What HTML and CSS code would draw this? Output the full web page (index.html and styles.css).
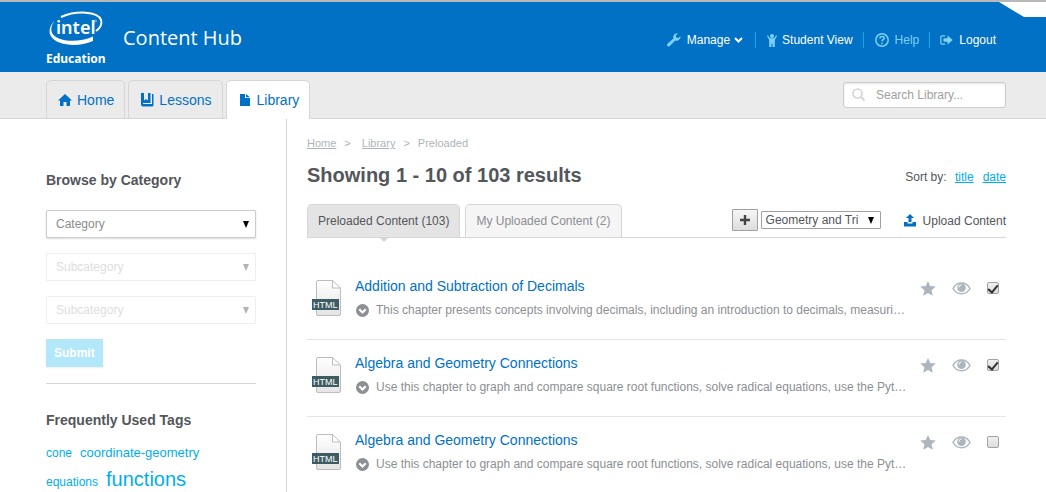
FILE: index.html
```html
<!DOCTYPE html>
<html lang="en">
<head>
<meta charset="utf-8">
<title>Content Hub</title>
<link rel="stylesheet" href="styles.css">
</head>
<body>
<svg class="defs" aria-hidden="true">
  <defs>
    <linearGradient id="paper" x1="0" y1="0" x2="0" y2="1"><stop offset="0" stop-color="#fff"/><stop offset="1" stop-color="#e4e4e4"/></linearGradient>
  </defs>
  <symbol id="i-html" viewBox="0 0 30 37">
    <path d="M6 .5h14.500l8 8V34a1.500 1.500 0 0 1-1.500 1.500H6A1.500 1.500 0 0 1 4.500 34V2A1.500 1.500 0 0 1 6 .5z" fill="url(#paper)" stroke="#bdbdbd"/>
    <path d="M20.500 .5v7.500h8z" fill="#fff" stroke="#bdbdbd"/>
    <path d="M0 19h27v11H0z" fill="#3d5c63"/>
  </symbol>
  <symbol id="i-down" viewBox="0 0 12 12"><circle cx="6" cy="6" r="6" fill="#8c8f93"/><path d="M3 4.800l3 3 3-3" fill="none" stroke="#fff" stroke-width="2"/></symbol>
  <symbol id="i-star" viewBox="0 0 16 15"><path fill="#adb5bd" d="M8 0l2.200 5.100 5.600.500-4.200 3.700 1.200 5.500L8 11.900l-4.800 2.900 1.200-5.500L.2 5.600l5.600-.500z"/></symbol>
  <symbol id="i-eye" viewBox="0 0 19 13"><path d="M1 6.500C5-.800 14-.800 18 6.500 14 13.500 5 13.500 1 6.500z" fill="none" stroke="#adb5bd" stroke-width="1.500"/><circle cx="9.500" cy="5.700" r="4.300" fill="#adb5bd"/><path d="M7 5.500A2.500 2.500 0 0 1 9.500 3" fill="none" stroke="#fff"/></symbol>
</svg>

<header class="header">
  <a class="brand" href="#" aria-label="Intel Education">
    <svg width="60" height="56" viewBox="0 0 60 56">
      <path d="M15 6C30-.500 52 0 55 9c1.200 4-1 8-5 11" fill="none" stroke="#fff" stroke-width="2"/>
      <path d="M9 9.500C4 14 1.500 21 5.500 26 11 34 31 37 47 30v-4.500C33 32 14 31 7.500 24 4 20 5 14 9 9.500z" fill="#fff"/>
      <text class="logo-intel" x="10" y="23">intel</text>
      <circle cx="49.500" cy="10" r="1" fill="none" stroke="#fff" stroke-width=".5"/>
      <text class="logo-education" x="0" y="52">Education</text>
    </svg>
  </a>
  <span class="product">Content Hub</span>
  <nav class="account" aria-label="Account">
    <a href="#"><svg width="14" height="14" viewBox="0 0 14 14"><path fill="#7fd0f5" d="M13.500 3.200A4 4 0 0 1 8.300 7.500l-5.500 5.600a1.600 1.600 0 0 1-2.300-2.300L6.400 5.400A4 4 0 0 1 10.900.300L8.900 2.500l.400 2 2 .500z"/></svg>Manage<svg class="chevron" width="9" height="6" viewBox="0 0 9 6"><path d="M1 1l3.500 3.500L8 1" fill="none" stroke="#fff" stroke-width="2"/></svg></a>
    <a class="student" href="#"><svg width="10" height="13" viewBox="0 0 10 13"><g fill="#7fd0f5"><circle cx="5" cy="2" r="2"/><path d="M.800 1.300L3 4.300h4l2.200-3 .8.700-2.200 4V13H5.500V9.500h-1V13H2.200V6L0 2z"/></g></svg>Student View</a>
    <a class="help" href="#"><svg width="14" height="14" viewBox="0 0 14 14"><circle cx="7" cy="7" r="6.200" fill="none" stroke="#7fd0f5" stroke-width="1.500"/><path d="M4.900 5.500c0-2.700 4.300-2.500 4.300-.200C9.200 6.800 7 6.700 7 8.500M7 9.700v1.500" fill="none" stroke="#7fd0f5" stroke-width="1.500"/></svg>Help</a>
    <a class="logout" href="#"><svg width="13" height="11" viewBox="0 0 13 11"><path d="M5 .800H2.300A1.500 1.500 0 0 0 .8 2.300v5.400a1.500 1.500 0 0 0 1.500 1.500H5" fill="none" stroke="#7fd0f5" stroke-width="1.200"/><path fill="#7fd0f5" d="M3.500 3.300H7.500V.500L12.800 5l-5.300 4.500V6.700h-4z"/></svg>Logout</a>
  </nav>
  <svg class="corner" width="47" height="15" viewBox="0 0 47 15" aria-hidden="true"><path d="M0 0h47v15H25z" fill="#fff"/></svg>
</header>

<div class="navbar">
  <nav class="tabs" aria-label="Sections">
    <a href="#"><svg width="14" height="12" viewBox="0 0 14 12"><path fill="#0071c5" d="M7 0l7 6.500h-2V12H8.500V8h-3v4H2V6.500H0z"/></svg>Home</a>
    <a href="#"><svg width="14" height="14" viewBox="0 0 14 14"><path fill="#0071c5" d="M1 0h3v7.500L6 6l2 1.500V0h2.500v10H3v1h9V1h1.500v11a1.500 1.500 0 0 1-1.500 1.500H3A2 2 0 0 1 1 11.500z"/></svg>Lessons</a>
    <a class="current" href="#" aria-current="page"><svg width="14" height="12" viewBox="0 0 14 12"><path fill="#0071c5" d="M2 0h5v4h5v8H2zM8 0l4 3.200H8z"/></svg>Library</a>
  </nav>
  <label class="search">
    <svg width="14" height="14" viewBox="0 0 14 14" aria-hidden="true"><circle cx="5.500" cy="5.500" r="4.500" fill="none" stroke="#d4d4d4" stroke-width="1.600"/><path d="M9 9l3.500 3.500" stroke="#d4d4d4" stroke-width="2"/></svg>
    <input type="text" placeholder="Search Library..." aria-label="Search Library">
  </label>
</div>

<div class="page">
  <aside class="sidebar">
    <form class="browse">
      <h2>Browse by Category</h2>
      <div class="picker"><select aria-label="Category"><option>Category</option></select></div>
      <div class="picker off"><select aria-label="Subcategory" disabled><option>Subcategory</option></select></div>
      <div class="picker off"><select aria-label="Second subcategory" disabled><option>Subcategory</option></select></div>
      <button class="submit" type="button" disabled>Submit</button>
    </form>
    <section class="tags">
      <h2>Frequently Used Tags</h2>
      <p><a href="#">cone</a><a class="t2" href="#">coordinate-geometry</a></p>
      <p><a href="#">equations</a><a class="t3" href="#">functions</a></p>
    </section>
  </aside>

  <main class="main">
    <nav class="crumbs" aria-label="Breadcrumb"><a href="#">Home</a><span class="sep">&gt;</span><a class="second" href="#">Library</a><span class="sep">&gt;</span><span class="here">Preloaded</span></nav>
    <div class="heading">
      <h1>Showing 1 - 10 of 103 results</h1>
      <div class="sort">Sort by: <a href="#">title</a><a href="#">date</a></div>
    </div>
    <div class="toolbar">
      <div class="content-tabs">
        <button class="active" type="button">Preloaded Content (103)</button>
        <button type="button">My Uploaded Content (2)</button>
      </div>
      <div class="tools">
        <button class="add" type="button" aria-label="Add"><svg width="10" height="10" viewBox="0 0 10 10"><path d="M5 0v10M0 5h10" stroke="#444" stroke-width="2.400"/></svg></button>
        <div class="picker small"><select aria-label="Collection"><option>Geometry and Tri</option></select></div>
        <a class="upload" href="#"><svg width="12" height="13" viewBox="0 0 12 13"><path fill="#0071c5" d="M6 0l4 4H7.500v4h-3V4H2zM0 8h3.500v1.500h5V8H12v4.500H0z"/></svg>Upload Content</a>
      </div>
    </div>
    <ul class="results">
      <li>
        <svg class="file" width="30" height="37" role="img" aria-label="HTML file"><use href="#i-html"/><text x="1" y="28">HTML</text></svg>
        <div class="info"><a href="#">Addition and Subtraction of Decimals</a>
          <div class="desc"><svg width="13" height="13"><use href="#i-down"/></svg><p>This chapter presents concepts involving decimals, including an introduction to decimals, measuri…</p></div></div>
        <div class="actions"><button type="button" aria-label="Favorite"><svg width="16" height="15"><use href="#i-star"/></svg></button><button type="button" aria-label="Preview"><svg width="19" height="13"><use href="#i-eye"/></svg></button><input type="checkbox" aria-label="Select Addition and Subtraction of Decimals" checked></div>
      </li>
      <li>
        <svg class="file" width="30" height="37" role="img" aria-label="HTML file"><use href="#i-html"/><text x="1" y="28">HTML</text></svg>
        <div class="info"><a href="#">Algebra and Geometry Connections</a>
          <div class="desc"><svg width="13" height="13"><use href="#i-down"/></svg><p>Use this chapter to graph and compare square root functions, solve radical equations, use the Pyt…</p></div></div>
        <div class="actions"><button type="button" aria-label="Favorite"><svg width="16" height="15"><use href="#i-star"/></svg></button><button type="button" aria-label="Preview"><svg width="19" height="13"><use href="#i-eye"/></svg></button><input type="checkbox" aria-label="Select Algebra and Geometry Connections" checked></div>
      </li>
      <li>
        <svg class="file" width="30" height="37" role="img" aria-label="HTML file"><use href="#i-html"/><text x="1" y="28">HTML</text></svg>
        <div class="info"><a href="#">Algebra and Geometry Connections</a>
          <div class="desc"><svg width="13" height="13"><use href="#i-down"/></svg><p>Use this chapter to graph and compare square root functions, solve radical equations, use the Pyt…</p></div></div>
        <div class="actions"><button type="button" aria-label="Favorite"><svg width="16" height="15"><use href="#i-star"/></svg></button><button type="button" aria-label="Preview"><svg width="19" height="13"><use href="#i-eye"/></svg></button><input type="checkbox" aria-label="Select Algebra and Geometry Connections, second copy"></div>
      </li>
    </ul>
  </main>
</div>
</body>
</html>
```

FILE: styles.css
```css
* { box-sizing: border-box; }
body {
  margin: 0;
  background: #fff;
  color: #53565a;
  font: 12px/16px "Liberation Sans", Arial, sans-serif;
}
a { color: #0071c5; text-decoration: none; }
h1, h2, p, ul { margin: 0; padding: 0; }
button, input, select { font: inherit; color: inherit; margin: 0; }
svg { flex: none; display: block; }
.defs { position: absolute; width: 0; height: 0; }

/* Header */
.header {
  position: relative;
  display: flex;
  align-items: flex-start;
  height: 72px;
  padding: 0 50px 0 46px;
  background: #0071c5;
  border-top: 2px solid #b9b9b9;
}
.brand { padding-top: 9px; }
.logo-intel { font: 600 18px "Noto Sans", sans-serif; fill: #fff; }
.logo-education { font: 700 12px "Noto Sans", sans-serif; fill: #fff; }
.product {
  margin-left: 17px;
  padding-top: 22px;
  color: #fff;
  font: 20px/28px "Open Sans", sans-serif;
}
.account { display: flex; margin-left: auto; padding-top: 30px; }
.account a {
  display: flex;
  align-items: center;
  gap: 6px;
  height: 16px;
  padding: 0 10px;
  color: #fff;
}
.account a + a { border-left: 1px solid #00aeef; padding-left: 11px; }
.account a:first-child { padding-right: 12px; }
.account .chevron { margin-left: -2px; }
.account .student { gap: 5px; }
.account .logout { padding-right: 0; padding-left: 10px; }
.account .help { color: #7fd0f5; }
.corner { position: absolute; top: 0; right: 0; }

/* Section tabs */
.navbar {
  display: flex;
  justify-content: space-between;
  align-items: flex-end;
  height: 47px;
  padding: 0 40px 0 46px;
  background: #ebebeb;
  border-bottom: 1px solid #d6d6d6;
}
.tabs { display: flex; gap: 3px; margin-bottom: -1px; }
.tabs a {
  display: flex;
  align-items: center;
  gap: 5px;
  height: 39px;
  padding: 0 10px 0 11px;
  border: 1px solid #d6d6d6;
  border-radius: 5px 5px 0 0;
  font-size: 14px;
}
.tabs .current { background: #fff; border-bottom-color: #fff; }
.search {
  display: flex;
  align-items: center;
  gap: 10px;
  width: 163px;
  height: 26px;
  margin-bottom: 10px;
  padding-left: 8px;
  background: #fff;
  border: 1px solid #ccc;
  border-radius: 3px;
  box-shadow: inset 0 1px 2px #e4e4e4;
}
.search input { min-width: 0; flex: 1; padding: 0; border: 0; background: none; outline: 0; }
.search input::placeholder { color: #a0a0a0; opacity: 1; }

/* Page columns */
.page { display: flex; padding: 0 40px 0 46px; }
.sidebar { flex: 0 0 241px; padding-right: 30px; border-right: 1px solid #d6d6d6; }
.main { flex: 1; min-width: 0; padding: 16px 0 0 20px; }

/* Sidebar */
.browse { padding: 51px 0 16px; border-bottom: 1px solid #d6d6d6; }
h2 { font-size: 14px; line-height: 20px; }
.picker { position: relative; margin-bottom: 15px; }
.browse h2 { margin-bottom: 20px; }
.picker select {
  display: block;
  width: 100%;
  height: 28px;
  padding: 0 22px 0 9px;
  appearance: none;
  background: #fff;
  border: 1px solid #ccc;
  border-radius: 1px;
  box-shadow: 0 1px 2px #ddd;
  color: #8c8c8c;
  opacity: 1;
}
.picker::after {
  content: "";
  position: absolute;
  right: 7px;
  top: 11px;
  border: solid transparent;
  border-width: 7px 3px 0;
  border-top-color: #000;
  pointer-events: none;
}
.picker.off select { color: #dedede; border-color: #efefef; box-shadow: none; }
.picker.off::after { border-top-color: #b3b3b3; }
.submit {
  display: block;
  height: 28px;
  padding: 0 8px;
  background: #b3e7fa;
  border: 0;
  color: #fff;
  font-weight: bold;
  box-shadow: 0 1px 2px #eee;
}
.tags { padding-top: 26px; }
.tags h2 { margin-bottom: 10px; }
.tags p { display: flex; align-items: baseline; gap: 8px; height: 26px; line-height: 26px; }
.tags a { color: #00aeef; }
.tags .t2 { font-size: 13px; }
.tags .t3 { font-size: 20px; }

/* Results heading */
.crumbs { display: flex; color: #aeb4b9; font-size: 11px; }
.crumbs a { color: inherit; text-decoration: underline; }
.sep { margin-left: 8px; }
.crumbs .second { margin-left: 11px; }
.crumbs .here { margin-left: 8px; }
.heading { display: flex; justify-content: space-between; align-items: flex-end; padding: 12px 0 17px; }
h1 { font-size: 20px; line-height: 24px; }
.sort { line-height: 20px; }
.sort a { margin-left: 9px; color: #00aeef; text-decoration: underline; }
.sort a:first-child { margin-left: 5px; }

/* Toolbar */
.toolbar { display: flex; justify-content: space-between; border-bottom: 1px solid #d6d6d6; }
.content-tabs { display: flex; gap: 5px; }
.content-tabs button {
  position: relative;
  height: 33px;
  padding: 0 10px;
  background: #f5f5f5;
  border: 1px solid #d6d6d6;
  border-bottom: 0;
  border-radius: 5px 5px 0 0;
  color: #8c8f93;
}
.content-tabs .active { background: #e4e4e4; color: #53565a; }
.content-tabs .active::after {
  content: "";
  position: absolute;
  left: 50%;
  top: 100%;
  margin-left: -5px;
  border: solid transparent;
  border-width: 5px 5px 0;
  border-top-color: #d6d6d6;
}
.tools { display: flex; align-items: center; gap: 3px; }
.add {
  display: grid;
  place-items: center;
  width: 26px;
  height: 22px;
  margin-bottom: 2px;
  padding: 0;
  background: linear-gradient(#f6f6f6, #ddd);
  border: 1px solid #a0a0a0;
  border-radius: 1px;
}
.picker.small { width: 120px; margin: 0 0 2px; }
.small select { height: 18px; padding: 0 18px 0 4px; border-color: #a0a0a0; box-shadow: none; color: #53565a; }
.picker.small::after { top: 6px; }
.upload { display: flex; align-items: center; gap: 7px; margin-left: 20px; color: #53565a; }

/* Results */
.results { list-style: none; padding-top: 25px; }
.results li { display: flex; height: 77px; border-bottom: 1px solid #e6e6e6; }
.results li:last-child { height: 75px; border-bottom: 0; }
.file { margin: 17px 13px 0 5px; }
.file text { font: 9px "Liberation Sans", Arial, sans-serif; fill: #fff; }
.info { flex: 1; min-width: 0; padding-top: 13px; }
.info > a { font-size: 14px; line-height: 20px; }
.desc { display: flex; align-items: center; gap: 7px; padding: 6px 0 0 1px; color: #8c8f93; }
.desc p { overflow: hidden; white-space: nowrap; text-overflow: ellipsis; }
.actions { display: flex; align-items: center; gap: 16px; height: 16px; margin: 17px 7px 0 8px; }
.actions button { padding: 0; border: 0; background: none; }
.actions input {
  display: grid;
  place-items: center;
  width: 12px;
  height: 12px;
  appearance: none;
  background: linear-gradient(#f0f0f0, #ddd);
  border: 1px solid #a3a3a3;
  border-radius: 2px;
}
.actions input:checked::after {
  content: "";
  width: 4px;
  height: 8px;
  margin-bottom: 3px;
  border: solid #333;
  border-width: 0 2px 2px 0;
  transform: rotate(40deg);
}
```
